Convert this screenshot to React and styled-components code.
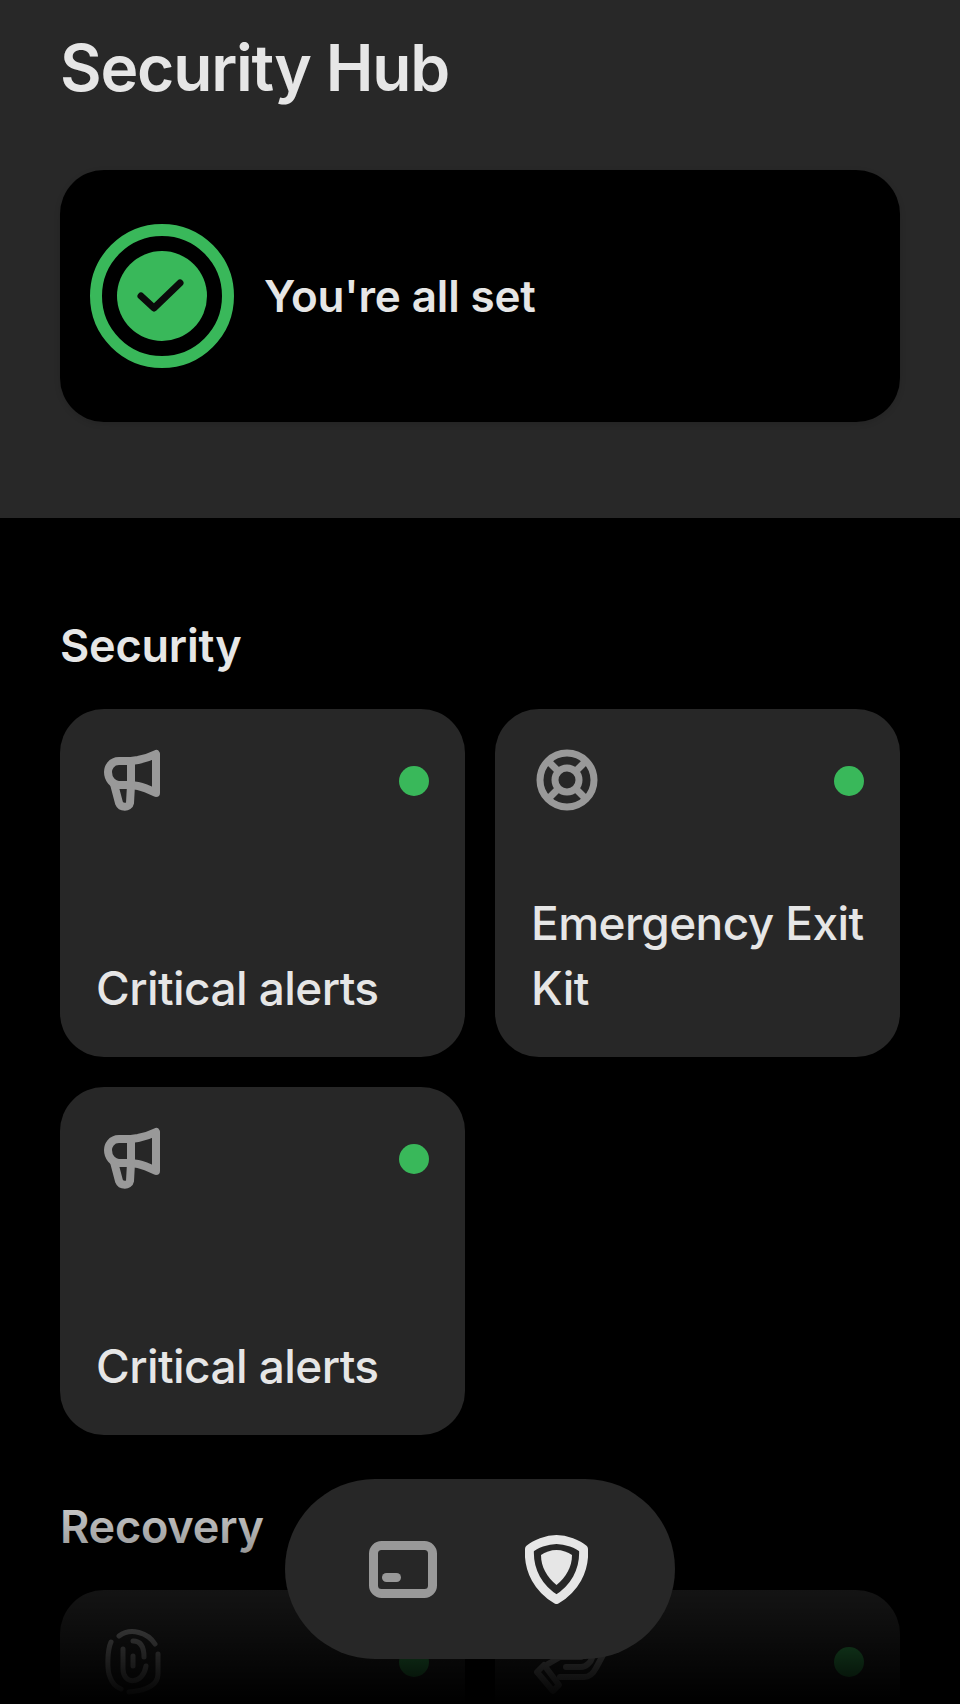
import styled, { createGlobalStyle } from 'styled-components'

const Global = createGlobalStyle`
  html, body { margin: 0; padding: 0; background: #000; }
  * { box-sizing: border-box; }
`

const Screen = styled.div`
  position: relative;
  width: 960px;
  height: 1704px;
  overflow: hidden;
  background: #000;
  font-family: Inter, "Noto Sans", sans-serif;
  color: #e6e6e6;
`

const Header = styled.header`
  height: 518px;
  padding: 33px 60px 0;
  background: #282828;
`

const Title = styled.h1`
  margin: 0 0 67px;
  height: 70px;
  font-size: 64px;
  line-height: 70px;
  font-weight: 620;
  letter-spacing: -1.2px;
`

const Status = styled.div`
  display: flex;
  align-items: center;
  gap: 30px;
  height: 252px;
  padding-left: 30px;
  border-radius: 44px;
  background: #000;
  box-shadow: 0 2px 6px rgba(0, 0, 0, 0.12);
`

const StatusText = styled.span`
  font-size: 44px;
  font-weight: 600;
  letter-spacing: -0.15px;
`

const Main = styled.main`
  padding: 100px 60px 0;
`

const Section = styled.section`
  margin-bottom: 64px;
`

const SectionTitle = styled.h2`
  margin: 0 0 35px;
  height: 56px;
  font-size: 45px;
  line-height: 56px;
  font-weight: 600;
  letter-spacing: -0.2px;
`

const Grid = styled.div`
  display: grid;
  grid-template-columns: 405px 405px;
  gap: 30px;
`

const Card = styled.div`
  display: flex;
  flex-direction: column;
  justify-content: space-between;
  height: 348px;
  padding: 40px 36px 36px 36px;
  border-radius: 44px;
  background: #272727;
`

const CardTop = styled.div`
  display: flex;
  justify-content: space-between;
  align-items: center;
  height: 62px;
  padding-left: 5px;
`

const Dot = styled.span`
  width: 30px;
  height: 30px;
  margin-top: 2px;
  border-radius: 50%;
  background: #39b85a;
`

const CardLabel = styled.div`
  margin-right: -10px;
  font-size: 46px;
  line-height: 65px;
  font-weight: 500;
  letter-spacing: -0.58px;
`

const Fade = styled.div`
  position: absolute;
  left: 0;
  right: 0;
  bottom: 0;
  height: 228px;
  background: linear-gradient(to bottom, rgba(0, 0, 0, 0), #000);
`

const Nav = styled.nav`
  position: absolute;
  left: 285px;
  top: 1479px;
  display: flex;
  align-items: center;
  justify-content: center;
  gap: 88px;
  width: 390px;
  height: 180px;
  padding-right: 4px;
  border-radius: 90px;
  background: #272727;
`

const GRAY = '#999999'

function CheckBadge() {
  return (
    <svg width="144" height="144" viewBox="0 0 144 144">
      <circle cx="72" cy="72" r="66" fill="none" stroke="#39b85a" strokeWidth="12" />
      <circle cx="72" cy="72" r="45" fill="#39b85a" />
      <path d="M51 72 L64 84 L90 59" fill="none" stroke="#0a0a0a" strokeWidth="7" strokeLinecap="round" strokeLinejoin="round" />
    </svg>
  )
}

function MegaphoneIcon() {
  return (
    <svg width="60" height="62" viewBox="0 0 60 62" fill="none" stroke={GRAY} strokeWidth="8" strokeLinecap="round" strokeLinejoin="round">
      <path d="M30 12 H18 C10 12 7 19 7 23 C7 30 12 36 18 36 H30 Z" />
      <path d="M30 12 L37 11 C42 10 49 8 55 5 V44 C49 41 42 38 37 37 L30 36" />
      <path d="M13 35 L18 54 C20 59 28 59 29 54 L30 36" />
    </svg>
  )
}

function LifebuoyIcon() {
  return (
    <svg width="62" height="62" viewBox="0 0 62 62" fill="none" stroke={GRAY}>
      <circle cx="31" cy="31" r="27" strokeWidth="7" />
      <circle cx="31" cy="31" r="12" strokeWidth="7" />
      <path d="M12 12 L22 22 M50 12 L40 22 M12 50 L22 40 M50 50 L40 40" strokeWidth="7" />
    </svg>
  )
}

function FingerprintIcon() {
  return (
    <svg width="62" height="68" viewBox="0 0 62 68" fill="none" stroke={GRAY} strokeWidth="5" strokeLinecap="round">
      <path d="M18 9 C30 0 47 6 54 17" />
      <path d="M10 15 C6 24 6 44 9 50 C11 56 15 60 20 62" />
      <path d="M57 27 V47 C57 56 50 63 28 65" />
      <path d="M22 22 V42 C22 58 42 58 45 39" />
      <path d="M32 14 C38 14 43 18 43 30" />
      <path d="M32 29 V39" />
    </svg>
  )
}

function HandIcon() {
  return (
    <svg width="70" height="66" viewBox="0 0 70 66" fill="none" stroke={GRAY} strokeWidth="6" strokeLinejoin="round" strokeLinecap="round" overflow="visible">
      <path d="M1 44 L8 37 L23 57 L17 63 Z" />
      <path d="M12 36 L24 29 H45" />
      <path d="M30 39 H45 C50 39 55 34 56 30" />
      <path d="M24 49 H48 C53 49 57 46 60 40 L67 27" />
    </svg>
  )
}

function CardIcon() {
  return (
    <svg width="68" height="57" viewBox="0 0 68 57" fill="none">
      <rect x="4.5" y="4.5" width="59" height="48" rx="8" stroke={GRAY} strokeWidth="9" />
      <rect x="13" y="32" width="19" height="9" rx="4.5" fill={GRAY} />
    </svg>
  )
}

function ShieldIcon() {
  return (
    <svg width="63" height="69" viewBox="0 0 63 69" fill="none">
      <path d="M31.5 4.5 C41 4.5 53 9 58.5 14 C60 36 49 54 31.5 64.5 C14 54 3 36 4.5 14 C10 9 22 4.5 31.5 4.5 Z" stroke="#e6e6e6" strokeWidth="9" strokeLinejoin="round" />
      <path d="M31.5 15 C37 15 43 17 47 20 C47 32 41 42 31.5 50 C22 42 16 32 16 20 C20 17 26 15 31.5 15 Z" fill="#e6e6e6" />
    </svg>
  )
}

export default function App() {
  return (
    <Screen>
      <Global />
      <Header>
        <Title>Security Hub</Title>
        <Status>
          <CheckBadge />
          <StatusText>You're all set</StatusText>
        </Status>
      </Header>
      <Main>
        <Section>
          <SectionTitle>Security</SectionTitle>
          <Grid>
            <Card>
              <CardTop><MegaphoneIcon /><Dot /></CardTop>
              <CardLabel>Critical alerts</CardLabel>
            </Card>
            <Card>
              <CardTop><LifebuoyIcon /><Dot /></CardTop>
              <CardLabel>Emergency Exit Kit</CardLabel>
            </Card>
            <Card>
              <CardTop><MegaphoneIcon /><Dot /></CardTop>
              <CardLabel>Critical alerts</CardLabel>
            </Card>
          </Grid>
        </Section>
        <Section>
          <SectionTitle>Recovery</SectionTitle>
          <Grid>
            <Card>
              <CardTop><FingerprintIcon /><Dot /></CardTop>
            </Card>
            <Card>
              <CardTop><HandIcon /><Dot /></CardTop>
            </Card>
          </Grid>
        </Section>
      </Main>
      <Fade />
      <Nav>
        <CardIcon />
        <ShieldIcon />
      </Nav>
    </Screen>
  )
}
